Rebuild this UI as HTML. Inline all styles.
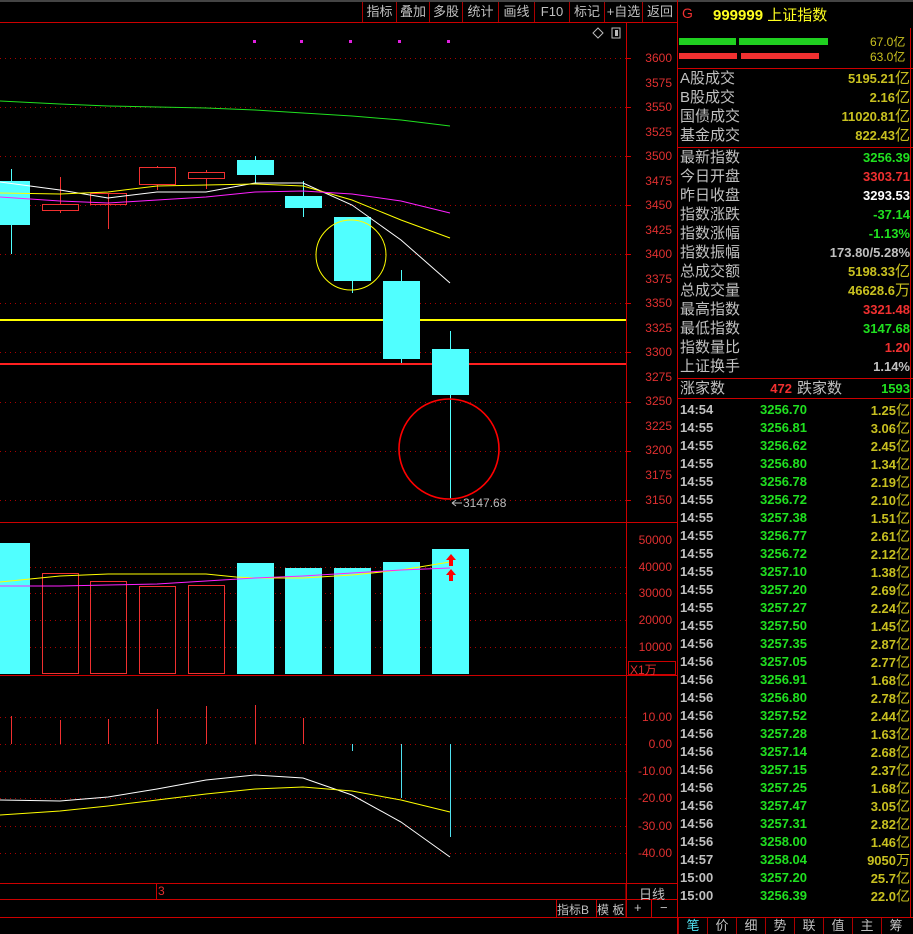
<!DOCTYPE html>
<html><head><meta charset="utf-8"><style>
*{margin:0;padding:0;box-sizing:border-box}
body{width:913px;height:934px;background:#000;position:relative;overflow:hidden;font-family:"Liberation Sans","WenQuanYi Zen Hei",sans-serif;color:#c0c0c0}
.a{position:absolute;white-space:nowrap}
.btn{position:absolute;top:2px;height:20px;font-size:13px;color:#c0c0c0;line-height:20px;text-align:center;border-left:1px solid #a00}
.ax{position:absolute;right:0;width:48px;text-align:right;font-size:12px;color:#e03030;padding-right:4px}
.r{position:absolute;left:680px;width:230px;height:19px;font-size:15px;line-height:19px}
.r .l{position:absolute;left:0;color:#c0c0c0}
.r .v{position:absolute;right:0;font-weight:bold;font-size:13px}
.t{position:absolute;left:680px;width:230px;height:18px;font-size:13px;font-weight:bold;line-height:18px}
.t .a1{position:absolute;left:0;color:#c0c0c0}
.t .a2{position:absolute;left:80px;color:#20e020}
.t .a3{position:absolute;right:0;color:#c8c020}
.tab{position:absolute;top:918px;height:16px;width:29px;font-size:13px;text-align:center;color:#c0c0c0;border-left:1px solid #a00;line-height:16px}
</style></head><body>
<svg class="a" style="left:0;top:0" width="913" height="934">
<line x1="0" y1="1" x2="913" y2="1" stroke="#888" stroke-width="1"/>
<line x1="0" y1="22.5" x2="677" y2="22.5" stroke="#c00"/>
<line x1="626.5" y1="23" x2="626.5" y2="917" stroke="#c00"/>
<line x1="677.5" y1="0" x2="677.5" y2="934" stroke="#c00"/>
<line x1="0" y1="522.5" x2="677" y2="522.5" stroke="#c00"/>
<line x1="0" y1="675.5" x2="677" y2="675.5" stroke="#c00"/>
<line x1="0" y1="883.5" x2="677" y2="883.5" stroke="#c00"/>
<line x1="0" y1="899.5" x2="677" y2="899.5" stroke="#c00"/>
<line x1="0" y1="917.5" x2="913" y2="917.5" stroke="#c00"/>
<line x1="156.5" y1="884" x2="156.5" y2="900" stroke="#c00"/>
<line x1="626" y1="884" x2="626" y2="917" stroke="#c00"/>
<line x1="556.5" y1="900" x2="556.5" y2="917" stroke="#c00"/>
<line x1="596.5" y1="900" x2="596.5" y2="917" stroke="#c00"/>
<line x1="651.5" y1="900" x2="651.5" y2="917" stroke="#c00"/>
<line x1="678" y1="68.5" x2="913" y2="68.5" stroke="#c00"/>
<line x1="678" y1="147.5" x2="913" y2="147.5" stroke="#c00"/>
<line x1="678" y1="378.5" x2="913" y2="378.5" stroke="#c00"/>
<line x1="678" y1="398.5" x2="913" y2="398.5" stroke="#c00"/>
<line x1="910.5" y1="28" x2="910.5" y2="917" stroke="#c00"/>
<g stroke="#a00" stroke-dasharray="1 4">
<line x1="0" y1="58.5" x2="626" y2="58.5"/><line x1="0" y1="107.5" x2="626" y2="107.5"/><line x1="0" y1="156.5" x2="626" y2="156.5"/><line x1="0" y1="205.5" x2="626" y2="205.5"/><line x1="0" y1="254.5" x2="626" y2="254.5"/><line x1="0" y1="303.5" x2="626" y2="303.5"/><line x1="0" y1="352.5" x2="626" y2="352.5"/><line x1="0" y1="402.5" x2="626" y2="402.5"/><line x1="0" y1="451.5" x2="626" y2="451.5"/><line x1="0" y1="500.5" x2="626" y2="500.5"/>
<line x1="30" y1="567.5" x2="626" y2="567.5"/><line x1="30" y1="593.5" x2="626" y2="593.5"/><line x1="30" y1="620.5" x2="626" y2="620.5"/><line x1="30" y1="647.5" x2="626" y2="647.5"/>
<line x1="0" y1="717.5" x2="626" y2="717.5"/><line x1="0" y1="744.5" x2="626" y2="744.5"/><line x1="0" y1="771.5" x2="626" y2="771.5"/><line x1="0" y1="798.5" x2="626" y2="798.5"/><line x1="0" y1="826.5" x2="626" y2="826.5"/><line x1="0" y1="853.5" x2="626" y2="853.5"/>
</g>
<g stroke="#c00"><line x1="627" y1="58.5" x2="631" y2="58.5"/><line x1="627" y1="107.5" x2="631" y2="107.5"/><line x1="627" y1="156.5" x2="631" y2="156.5"/><line x1="627" y1="205.5" x2="631" y2="205.5"/><line x1="627" y1="254.5" x2="631" y2="254.5"/><line x1="627" y1="303.5" x2="631" y2="303.5"/><line x1="627" y1="352.5" x2="631" y2="352.5"/><line x1="627" y1="402.5" x2="631" y2="402.5"/><line x1="627" y1="451.5" x2="631" y2="451.5"/><line x1="627" y1="500.5" x2="631" y2="500.5"/></g>
<rect x="679" y="38" width="57" height="7" fill="#20d020"/><rect x="739" y="38" width="89" height="7" fill="#20d020"/>
<rect x="679" y="53" width="58" height="6" fill="#f03030"/><rect x="741" y="53" width="78" height="6" fill="#f03030"/>
<g fill="#e020e0"><rect x="253" y="40" width="3" height="3"/><rect x="300" y="40" width="3" height="3"/><rect x="349" y="40" width="3" height="3"/><rect x="398" y="40" width="3" height="3"/><rect x="447" y="40" width="3" height="3"/></g>
<path d="M598 28 L603 33 L598 38 L593 33 Z" fill="none" stroke="#bbb"/>
<rect x="612" y="28" width="8" height="10" fill="none" stroke="#bbb"/><rect x="615" y="30" width="3" height="6" fill="#bbb"/>
<polyline points="0,101 60,104 108,106 157,107 206,108 255,110 303,113 352,116 401,120 450,126" fill="none" stroke="#20e020"/>
<line x1="0" y1="320" x2="626" y2="320" stroke="#ffff00" stroke-width="2"/>
<line x1="0" y1="364" x2="626" y2="364" stroke="#ff2020" stroke-width="2"/>
<g stroke="#50ffff" fill="#50ffff">
<line x1="11.5" y1="169" x2="11.5" y2="254"/><rect x="0" y="181" width="30" height="44" stroke="none"/>
<line x1="255.5" y1="156" x2="255.5" y2="183"/><rect x="237" y="160" width="37" height="15" stroke="none"/>
<line x1="303.5" y1="181" x2="303.5" y2="217"/><rect x="285" y="196" width="37" height="12" stroke="none"/>
<line x1="352.5" y1="217" x2="352.5" y2="293"/><rect x="334" y="217" width="37" height="64" stroke="none"/>
<line x1="401.5" y1="270" x2="401.5" y2="363"/><rect x="383" y="281" width="37" height="78" stroke="none"/>
<line x1="450.5" y1="331" x2="450.5" y2="499"/><rect x="432" y="349" width="37" height="46" stroke="none"/>
</g>
<g stroke="#f03030" fill="none">
<line x1="60.5" y1="177" x2="60.5" y2="213"/><rect x="42.5" y="204.5" width="36" height="6" fill="#000"/>
<line x1="108.5" y1="193" x2="108.5" y2="229"/><rect x="90.5" y="193.5" width="36" height="11"/>
<line x1="157.5" y1="166" x2="157.5" y2="190"/><rect x="139.5" y="167.5" width="36" height="17" fill="#000"/>
<line x1="206.5" y1="170" x2="206.5" y2="189"/><rect x="188.5" y="172.5" width="36" height="6" fill="#000"/>
</g>
<polyline points="0,182 60,190 108,198 157,192 206,192 255,183 303,183 352,205 401,240 450,283" fill="none" stroke="#fff"/>
<polyline points="0,193 60,194 108,192 157,186 206,185 255,184 303,186 352,200 401,220 450,238" fill="none" stroke="#ffff00"/>
<polyline points="0,197 60,201 108,203 157,200 206,197 255,192 303,191 352,194 401,201 450,213" fill="none" stroke="#ff20ff"/>
<circle cx="351" cy="255" r="35" fill="none" stroke="#ffff00"/>
<circle cx="449" cy="449" r="50" fill="none" stroke="#ff0000" stroke-width="1.6"/>
<path d="M452 503 L462 503 M452 503 L456 500 M452 503 L456 506" stroke="#bbb" fill="none"/>
<g fill="#50ffff"><rect x="0" y="543" width="30" height="131"/><rect x="237" y="563" width="37" height="111"/><rect x="285" y="568" width="37" height="106"/><rect x="334" y="568" width="37" height="106"/><rect x="383" y="562" width="37" height="112"/><rect x="432" y="549" width="37" height="125"/></g>
<g fill="none" stroke="#f03030"><rect x="42.5" y="573.5" width="36" height="100"/><rect x="90.5" y="581.5" width="36" height="92"/><rect x="139.5" y="586.5" width="36" height="87"/><rect x="188.5" y="585.5" width="36" height="88"/></g>
<polyline points="0,582 60,576 108,574 157,574 206,574 236,577 255,578 303,578 352,575 401,570 450,562" fill="none" stroke="#ffff00"/>
<polyline points="0,586 60,586 108,585 157,584 206,581 255,578 303,576 352,573 401,570 450,568" fill="none" stroke="#ff20ff"/>
<g fill="#ff0000"><path d="M451 554 L456 560 L453 560 L453 566 L449 566 L449 560 L446 560 Z"/><path d="M451 569 L456 575 L453 575 L453 581 L449 581 L449 575 L446 575 Z"/></g>
<rect x="628.5" y="661.5" width="47" height="13" fill="none" stroke="#c00"/>
<g stroke="#f03030"><line x1="11.5" y1="716" x2="11.5" y2="744"/><line x1="60.5" y1="720" x2="60.5" y2="744"/><line x1="108.5" y1="719" x2="108.5" y2="744"/><line x1="157.5" y1="709" x2="157.5" y2="744"/><line x1="206.5" y1="706" x2="206.5" y2="744"/><line x1="255.5" y1="705" x2="255.5" y2="744"/><line x1="303.5" y1="718" x2="303.5" y2="744"/></g>
<g stroke="#50e0f0"><line x1="352.5" y1="744" x2="352.5" y2="751"/><line x1="401.5" y1="744" x2="401.5" y2="798"/><line x1="450.5" y1="744" x2="450.5" y2="837"/></g>
<polyline points="0,800 60,801 108,797 157,789 206,780 255,775 303,778 352,795 401,822 450,857" fill="none" stroke="#fff"/>
<polyline points="0,815 60,811 108,806 157,800 206,794 255,789 303,787 352,791 401,800 450,812" fill="none" stroke="#ffff00"/>
</svg>
<div class="btn" style="left:362px;width:34px">指标</div>
<div class="btn" style="left:396px;width:33px">叠加</div>
<div class="btn" style="left:429px;width:33px">多股</div>
<div class="btn" style="left:462px;width:36px">统计</div>
<div class="btn" style="left:498px;width:36px">画线</div>
<div class="btn" style="left:534px;width:35px">F10</div>
<div class="btn" style="left:569px;width:35px">标记</div>
<div class="btn" style="left:604px;width:38px">+自选</div>
<div class="btn" style="left:642px;width:35px">返回</div>
<div class="a" style="left:682px;top:5px;font-size:14px;color:#f03030">G</div>
<div class="a" style="left:713px;top:4px;font-size:15px;color:#ffff20;font-weight:bold">999999 <span style="font-weight:normal">上证指数</span></div>
<div class="a" style="left:870px;top:33px;font-size:12px;color:#c8c020">67.0亿</div>
<div class="a" style="left:870px;top:48px;font-size:12px;color:#c8c020">63.0亿</div>
<div class="a" style="left:463px;top:496px;font-size:12px;color:#bbb">3147.68</div>
<div class="ax" style="top:51px;left:628px">3600</div><div class="ax" style="top:76px;left:628px">3575</div><div class="ax" style="top:100px;left:628px">3550</div><div class="ax" style="top:125px;left:628px">3525</div><div class="ax" style="top:149px;left:628px">3500</div><div class="ax" style="top:174px;left:628px">3475</div><div class="ax" style="top:198px;left:628px">3450</div><div class="ax" style="top:223px;left:628px">3425</div><div class="ax" style="top:247px;left:628px">3400</div><div class="ax" style="top:272px;left:628px">3375</div><div class="ax" style="top:296px;left:628px">3350</div><div class="ax" style="top:321px;left:628px">3325</div><div class="ax" style="top:345px;left:628px">3300</div><div class="ax" style="top:370px;left:628px">3275</div><div class="ax" style="top:394px;left:628px">3250</div><div class="ax" style="top:419px;left:628px">3225</div><div class="ax" style="top:443px;left:628px">3200</div><div class="ax" style="top:468px;left:628px">3175</div><div class="ax" style="top:493px;left:628px">3150</div>
<div class="ax" style="top:533px;left:628px">50000</div><div class="ax" style="top:560px;left:628px">40000</div><div class="ax" style="top:586px;left:628px">30000</div><div class="ax" style="top:613px;left:628px">20000</div><div class="ax" style="top:640px;left:628px">10000</div>
<div class="a" style="left:630px;top:661px;font-size:12px;color:#e03030">X1万</div>
<div class="ax" style="top:710px;left:628px">10.00</div><div class="ax" style="top:737px;left:628px">0.00</div><div class="ax" style="top:764px;left:628px">-10.00</div><div class="ax" style="top:791px;left:628px">-20.00</div><div class="ax" style="top:819px;left:628px">-30.00</div><div class="ax" style="top:846px;left:628px">-40.00</div>
<div class="a" style="left:158px;top:884px;font-size:12px;color:#e03030">3</div>
<div class="a" style="left:639px;top:884px;font-size:13px;color:#c0c0c0">日线</div>
<div class="a" style="left:557px;top:901px;font-size:12px;color:#c0c0c0">指标B</div>
<div class="a" style="left:597px;top:901px;font-size:12px;color:#c0c0c0">模 板</div>
<div class="a" style="left:634px;top:900px;font-size:13px;color:#c0c0c0">+</div>
<div class="a" style="left:660px;top:900px;font-size:13px;color:#c0c0c0">−</div>
<div class="r" style="top:69px"><span class="l">A股成交</span><span class="v" style="color:#c8c020">5195.21<span style="font-weight:normal;font-size:15px">亿</span></span></div>
<div class="r" style="top:88px"><span class="l">B股成交</span><span class="v" style="color:#c8c020">2.16<span style="font-weight:normal;font-size:15px">亿</span></span></div>
<div class="r" style="top:107px"><span class="l">国债成交</span><span class="v" style="color:#c8c020">11020.81<span style="font-weight:normal;font-size:15px">亿</span></span></div>
<div class="r" style="top:126px"><span class="l">基金成交</span><span class="v" style="color:#c8c020">822.43<span style="font-weight:normal;font-size:15px">亿</span></span></div>
<div class="r" style="top:148px"><span class="l">最新指数</span><span class="v" style="color:#20e020">3256.39</span></div>
<div class="r" style="top:167px"><span class="l">今日开盘</span><span class="v" style="color:#f03030">3303.71</span></div>
<div class="r" style="top:186px"><span class="l">昨日收盘</span><span class="v" style="color:#fff">3293.53</span></div>
<div class="r" style="top:205px"><span class="l">指数涨跌</span><span class="v" style="color:#20e020">-37.14</span></div>
<div class="r" style="top:224px"><span class="l">指数涨幅</span><span class="v" style="color:#20e020">-1.13%</span></div>
<div class="r" style="top:243px"><span class="l">指数振幅</span><span class="v" style="color:#c0c0c0">173.80/5.28%</span></div>
<div class="r" style="top:262px"><span class="l">总成交额</span><span class="v" style="color:#c8c020">5198.33<span style="font-weight:normal;font-size:15px">亿</span></span></div>
<div class="r" style="top:281px"><span class="l">总成交量</span><span class="v" style="color:#c8c020">46628.6<span style="font-weight:normal;font-size:15px">万</span></span></div>
<div class="r" style="top:300px"><span class="l">最高指数</span><span class="v" style="color:#f03030">3321.48</span></div>
<div class="r" style="top:319px"><span class="l">最低指数</span><span class="v" style="color:#20e020">3147.68</span></div>
<div class="r" style="top:338px"><span class="l">指数量比</span><span class="v" style="color:#f03030">1.20</span></div>
<div class="r" style="top:357px"><span class="l">上证换手</span><span class="v" style="color:#c0c0c0">1.14%</span></div>
<div class="r" style="top:379px"><span class="l">涨家数</span><span class="v" style="right:118px;color:#f03030">472</span><span class="l" style="left:117px">跌家数</span><span class="v" style="color:#20e020">1593</span></div>
<div class="t" style="top:401px"><span class="a1">14:54</span><span class="a2">3256.70</span><span class="a3">1.25<span style="font-weight:normal;font-size:14px">亿</span></span></div>
<div class="t" style="top:419px"><span class="a1">14:55</span><span class="a2">3256.81</span><span class="a3">3.06<span style="font-weight:normal;font-size:14px">亿</span></span></div>
<div class="t" style="top:437px"><span class="a1">14:55</span><span class="a2">3256.62</span><span class="a3">2.45<span style="font-weight:normal;font-size:14px">亿</span></span></div>
<div class="t" style="top:455px"><span class="a1">14:55</span><span class="a2">3256.80</span><span class="a3">1.34<span style="font-weight:normal;font-size:14px">亿</span></span></div>
<div class="t" style="top:473px"><span class="a1">14:55</span><span class="a2">3256.78</span><span class="a3">2.19<span style="font-weight:normal;font-size:14px">亿</span></span></div>
<div class="t" style="top:491px"><span class="a1">14:55</span><span class="a2">3256.72</span><span class="a3">2.10<span style="font-weight:normal;font-size:14px">亿</span></span></div>
<div class="t" style="top:509px"><span class="a1">14:55</span><span class="a2">3257.38</span><span class="a3">1.51<span style="font-weight:normal;font-size:14px">亿</span></span></div>
<div class="t" style="top:527px"><span class="a1">14:55</span><span class="a2">3256.77</span><span class="a3">2.61<span style="font-weight:normal;font-size:14px">亿</span></span></div>
<div class="t" style="top:545px"><span class="a1">14:55</span><span class="a2">3256.72</span><span class="a3">2.12<span style="font-weight:normal;font-size:14px">亿</span></span></div>
<div class="t" style="top:563px"><span class="a1">14:55</span><span class="a2">3257.10</span><span class="a3">1.38<span style="font-weight:normal;font-size:14px">亿</span></span></div>
<div class="t" style="top:581px"><span class="a1">14:55</span><span class="a2">3257.20</span><span class="a3">2.69<span style="font-weight:normal;font-size:14px">亿</span></span></div>
<div class="t" style="top:599px"><span class="a1">14:55</span><span class="a2">3257.27</span><span class="a3">2.24<span style="font-weight:normal;font-size:14px">亿</span></span></div>
<div class="t" style="top:617px"><span class="a1">14:55</span><span class="a2">3257.50</span><span class="a3">1.45<span style="font-weight:normal;font-size:14px">亿</span></span></div>
<div class="t" style="top:635px"><span class="a1">14:56</span><span class="a2">3257.35</span><span class="a3">2.87<span style="font-weight:normal;font-size:14px">亿</span></span></div>
<div class="t" style="top:653px"><span class="a1">14:56</span><span class="a2">3257.05</span><span class="a3">2.77<span style="font-weight:normal;font-size:14px">亿</span></span></div>
<div class="t" style="top:671px"><span class="a1">14:56</span><span class="a2">3256.91</span><span class="a3">1.68<span style="font-weight:normal;font-size:14px">亿</span></span></div>
<div class="t" style="top:689px"><span class="a1">14:56</span><span class="a2">3256.80</span><span class="a3">2.78<span style="font-weight:normal;font-size:14px">亿</span></span></div>
<div class="t" style="top:707px"><span class="a1">14:56</span><span class="a2">3257.52</span><span class="a3">2.44<span style="font-weight:normal;font-size:14px">亿</span></span></div>
<div class="t" style="top:725px"><span class="a1">14:56</span><span class="a2">3257.28</span><span class="a3">1.63<span style="font-weight:normal;font-size:14px">亿</span></span></div>
<div class="t" style="top:743px"><span class="a1">14:56</span><span class="a2">3257.14</span><span class="a3">2.68<span style="font-weight:normal;font-size:14px">亿</span></span></div>
<div class="t" style="top:761px"><span class="a1">14:56</span><span class="a2">3257.15</span><span class="a3">2.37<span style="font-weight:normal;font-size:14px">亿</span></span></div>
<div class="t" style="top:779px"><span class="a1">14:56</span><span class="a2">3257.25</span><span class="a3">1.68<span style="font-weight:normal;font-size:14px">亿</span></span></div>
<div class="t" style="top:797px"><span class="a1">14:56</span><span class="a2">3257.47</span><span class="a3">3.05<span style="font-weight:normal;font-size:14px">亿</span></span></div>
<div class="t" style="top:815px"><span class="a1">14:56</span><span class="a2">3257.31</span><span class="a3">2.82<span style="font-weight:normal;font-size:14px">亿</span></span></div>
<div class="t" style="top:833px"><span class="a1">14:56</span><span class="a2">3258.00</span><span class="a3">1.46<span style="font-weight:normal;font-size:14px">亿</span></span></div>
<div class="t" style="top:851px"><span class="a1">14:57</span><span class="a2">3258.04</span><span class="a3">9050<span style="font-weight:normal;font-size:14px">万</span></span></div>
<div class="t" style="top:869px"><span class="a1">15:00</span><span class="a2">3257.20</span><span class="a3">25.7<span style="font-weight:normal;font-size:14px">亿</span></span></div>
<div class="t" style="top:887px"><span class="a1">15:00</span><span class="a2">3256.39</span><span class="a3">22.0<span style="font-weight:normal;font-size:14px">亿</span></span></div>
<div class="tab" style="left:678px;color:#50e0f0">笔</div>
<div class="tab" style="left:707px">价</div>
<div class="tab" style="left:736px">细</div>
<div class="tab" style="left:765px">势</div>
<div class="tab" style="left:794px">联</div>
<div class="tab" style="left:823px">值</div>
<div class="tab" style="left:852px">主</div>
<div class="tab" style="left:881px">筹</div>
</body></html>
